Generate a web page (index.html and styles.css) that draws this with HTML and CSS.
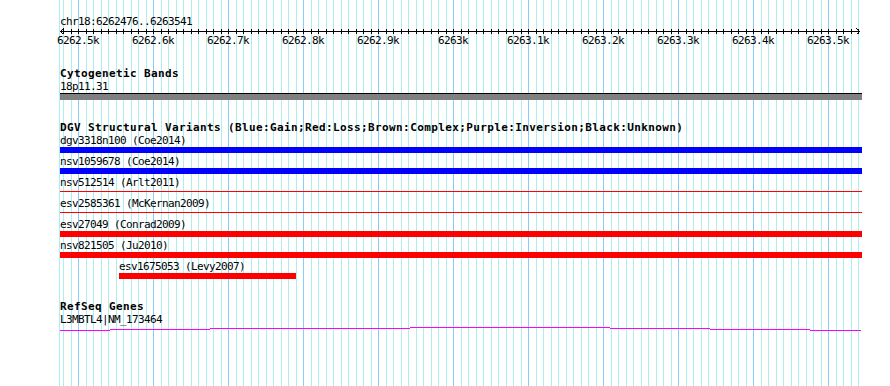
FILE: index.html
```html
<!DOCTYPE html>
<html lang="en">
<head>
    <meta charset="UTF-8">
    <title>chr18:6262476..6263541</title>
    <link rel="stylesheet" href="styles.css">
</head>
<body>
    <div class="browser">
        <svg class="ruler" width="802" height="49" viewBox="0 0 802 49">
            <defs>
                <pattern id="ticks" x="3" y="29" width="15" height="5" patternUnits="userSpaceOnUse">
                    <rect width="1" height="5"/>
                    <rect x="8" width="1" height="5"/>
                </pattern>
            </defs>
            <text class="ruler-text" x="0" y="25">chr18:6262476..6263541</text>
            <rect x="3" y="29" width="797" height="5" fill="url(#ticks)"/>
            <path class="axis" d="M0 31.5H800M3.5 28.5L0.5 31.5L3.5 34.5M796.5 28.5L799.5 31.5L796.5 34.5"/>
            <g class="tick-labels">
                <text x="18" y="44">6262.5k</text>
                <text x="93" y="44">6262.6k</text>
                <text x="168" y="44">6262.7k</text>
                <text x="243" y="44">6262.8k</text>
                <text x="318" y="44">6262.9k</text>
                <text x="393" y="44">6263k</text>
                <text x="468" y="44">6263.1k</text>
                <text x="543" y="44">6263.2k</text>
                <text x="618" y="44">6263.3k</text>
                <text x="693" y="44">6263.4k</text>
                <text x="768" y="44">6263.5k</text>
            </g>
        </svg>

        <section class="track">
            <h2 class="track-title">Cytogenetic Bands</h2>
            <div class="feature">
                <div class="feature-label">18p11.31</div>
                <div class="band"></div>
            </div>
        </section>

        <section class="track">
            <h2 class="track-title">DGV Structural Variants (Blue:Gain;Red:Loss;Brown:Complex;Purple:Inversion;Black:Unknown)</h2>
            <div class="feature">
                <div class="feature-label">dgv3318n100 (Coe2014)</div>
                <div class="bar gain"></div>
            </div>
            <div class="feature">
                <div class="feature-label">nsv1059678 (Coe2014)</div>
                <div class="bar gain"></div>
            </div>
            <div class="feature">
                <div class="feature-label">nsv512514 (Arlt2011)</div>
                <div class="bar loss thin"></div>
            </div>
            <div class="feature">
                <div class="feature-label">esv2585361 (McKernan2009)</div>
                <div class="bar loss thin"></div>
            </div>
            <div class="feature">
                <div class="feature-label">esv27049 (Conrad2009)</div>
                <div class="bar loss"></div>
            </div>
            <div class="feature">
                <div class="feature-label">nsv821505 (Ju2010)</div>
                <div class="bar loss"></div>
            </div>
            <div class="feature" style="margin-left: 59px;">
                <div class="feature-label">esv1675053 (Levy2007)</div>
                <div class="bar loss" style="width: 177px;"></div>
            </div>
        </section>

        <section class="track">
            <h2 class="track-title">RefSeq Genes</h2>
            <div class="feature">
                <div class="feature-label">L3MBTL4|NM_173464</div>
                <svg class="gene" width="802" height="6" viewBox="0 0 802 6">
                    <path d="M0 4.5H50M50 3.5H150M150 2.5H350M350 1.5H550M550 2.5H650M650 3.5H750M750 4.5H801"/>
                </svg>
            </div>
        </section>
    </div>
</body>
</html>
```

FILE: styles.css
```css
body {
    margin: 0;
    background: #fff;
    color: #000;
    font-family: "DejaVu Sans Mono", "Liberation Mono", monospace;
}

/* grid: minor line every 10bp (7.5px), major every 100bp */
.browser {
    margin-left: 59px;
    padding-left: 1px;
    width: 802px;
    height: 386px;
    background-image:
        linear-gradient(to right, #87cefa 0 1px, transparent 1px),
        linear-gradient(to right, #aeeeee 0 1px, transparent 1px 8px, #aeeeee 8px 9px, transparent 9px),
        linear-gradient(to right, #aeeeee 0 1px, transparent 1px);
    background-size: 75px 100%, 15px 100%, 1px 100%;
    background-position: 19px 0, 4px 0, 0 0;
    background-repeat: repeat-x, repeat-x, no-repeat;
}

.ruler {
    display: block;
    overflow: visible;
    margin-bottom: 19px;
    shape-rendering: crispEdges;
}

.ruler text {
    font-family: "DejaVu Sans Mono", "Liberation Mono", monospace;
    font-size: 11px;
    letter-spacing: -0.62px;
    fill: #000;
}

.tick-labels text {
    text-anchor: middle;
}

.axis {
    fill: none;
    stroke: #000;
    stroke-width: 1;
}

.track {
    padding-bottom: 19px;
}

.track-title {
    margin: 0;
    padding-bottom: 1px;
    font-size: 11px;
    line-height: 12px;
    font-weight: bold;
    letter-spacing: 0.38px;
    white-space: nowrap;
}

.feature {
    padding-bottom: 3px;
}

.feature-label {
    font-size: 11px;
    line-height: 12px;
    letter-spacing: -0.62px;
    white-space: nowrap;
}

.band {
    height: 6px;
    border-top: 1px solid #000;
    background: #808080;
}

.bar {
    height: 6px;
}

.bar.gain {
    background: #0000ff;
}

.bar.loss {
    background: #ff0000;
}

.bar.thin {
    height: 1px;
    border-top: 2px solid transparent;
    border-bottom: 3px solid transparent;
    background-clip: content-box;
}

.gene {
    display: block;
    shape-rendering: crispEdges;
}

.gene path {
    fill: none;
    stroke: #ff00ff;
    stroke-width: 1;
}
```
